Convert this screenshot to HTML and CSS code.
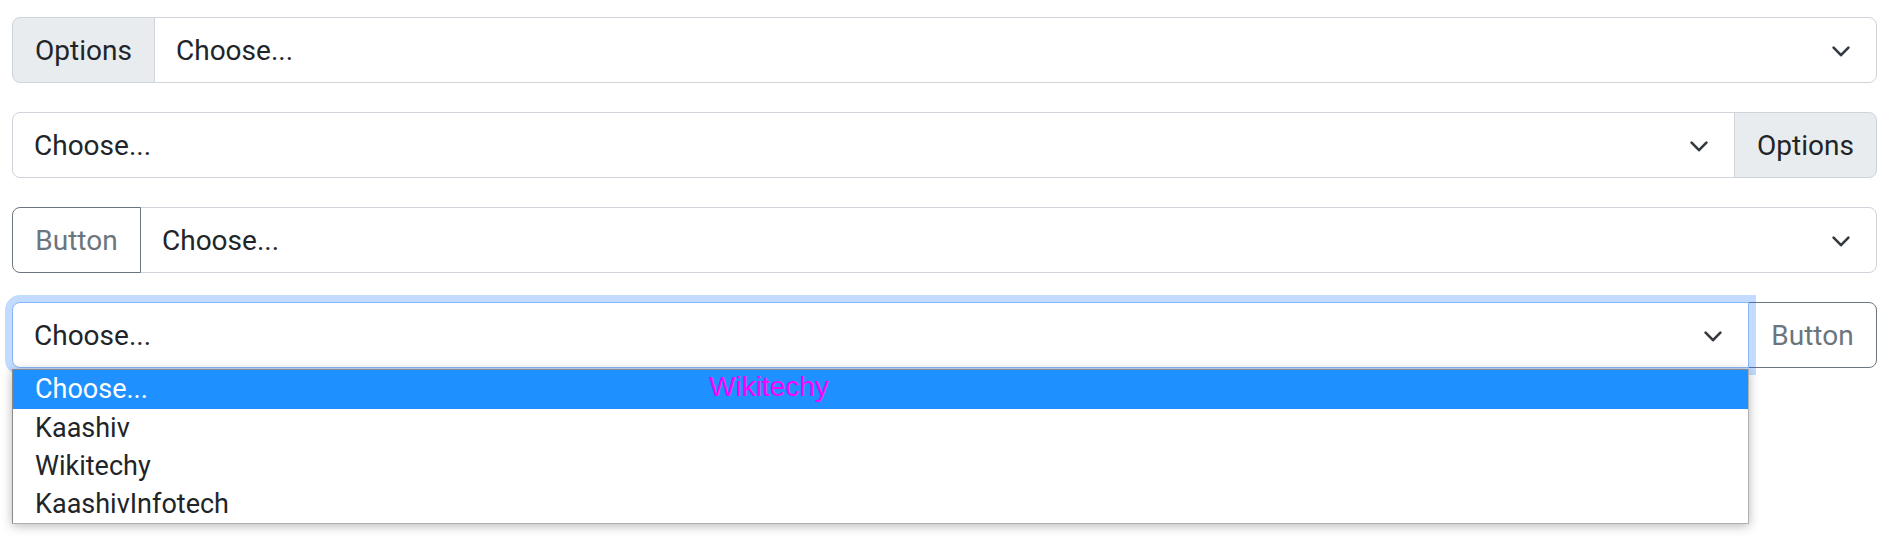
FILE: index.html
```html
<!DOCTYPE html>
<html lang="en">
<head>
<meta charset="utf-8">
<title>Input group selects</title>
<link rel="stylesheet" href="styles.css">
</head>
<body>
<div class="page">
  <div class="input-group">
    <div class="addon addon-first">Options</div>
    <div class="form-select select-last">
      <span>Choose...</span>
      <svg class="chev" width="18" height="12" viewBox="0 0 18 12"><polyline points="1.6,1.6 9,9.2 16.4,1.6"/></svg>
    </div>
  </div>

  <div class="input-group">
    <div class="form-select select-first">
      <span>Choose...</span>
      <svg class="chev" width="18" height="12" viewBox="0 0 18 12"><polyline points="1.6,1.6 9,9.2 16.4,1.6"/></svg>
    </div>
    <div class="addon addon-last">Options</div>
  </div>

  <div class="input-group">
    <div class="btn btn-first">Button</div>
    <div class="form-select select-last">
      <span>Choose...</span>
      <svg class="chev" width="18" height="12" viewBox="0 0 18 12"><polyline points="1.6,1.6 9,9.2 16.4,1.6"/></svg>
    </div>
  </div>

  <div class="input-group">
    <div class="form-select select-first is-focused">
      <span>Choose...</span>
      <svg class="chev" width="18" height="12" viewBox="0 0 18 12"><polyline points="1.6,1.6 9,9.2 16.4,1.6"/></svg>
      <ul class="dropdown">
        <li class="option selected">Choose...</li>
        <li class="option">Kaashiv</li>
        <li class="option">Wikitechy</li>
        <li class="option">KaashivInfotech</li>
      </ul>
    </div>
    <div class="btn btn-last">Button</div>
  </div>
</div>
<div class="watermark">Wikitechy</div>
</body>
</html>
```

FILE: styles.css
```css
html, body {
  margin: 0;
  padding: 0;
  background: #ffffff;
}

body {
  position: relative;
  width: 1892px;
  height: 545px;
  overflow: hidden;
  font-family: Roboto, "Noto Sans", "Liberation Sans", sans-serif;
  font-size: 28px;
  color: #212529;
}

.page {
  padding: 17px 15px 0 12px;
  display: flex;
  flex-direction: column;
  gap: 29px;
}

.input-group {
  display: flex;
  height: 66px;
}

.addon,
.btn,
.form-select {
  box-sizing: border-box;
  height: 66px;
  line-height: 42px;
  padding: 12px 21px 10px;
  border: 1px solid #ced4da;
  white-space: nowrap;
}

.addon {
  flex: none;
  width: 143px;
  text-align: center;
  padding-left: 0;
  padding-right: 0;
  background: #e9ecef;
  color: #212529;
}

.btn {
  flex: none;
  border-color: #6c757d;
  color: #6c757d;
  background: #ffffff;
  position: relative;
  z-index: 2;
  width: 129px;
  text-align: center;
  padding-left: 0;
  padding-right: 0;
}

.addon-first,
.btn-first,
.select-first {
  border-radius: 8px 0 0 8px;
}

.addon-last,
.btn-last,
.select-last {
  border-radius: 0 8px 8px 0;
  margin-left: -1px;
}

.form-select {
  flex: 1;
  position: relative;
  display: flex;
  align-items: center;
  justify-content: space-between;
  padding-right: 26px;
  background: #ffffff;
}

.chev {
  flex: none;
  margin-top: 1px;
}

.chev polyline {
  fill: none;
  stroke: #343a40;
  stroke-width: 2.6;
  stroke-linecap: round;
  stroke-linejoin: round;
}

.is-focused {
  border-color: #86b7fe;
  box-shadow: 0 0 0 7px rgba(13, 110, 253, 0.25);
  z-index: 3;
}

.dropdown {
  position: absolute;
  left: -1px;
  right: -1px;
  top: calc(100% + 2px);
  margin: 0;
  padding: 0;
  list-style: none;
  background: #ffffff;
  border: 1px solid #8a8a8a;
  border-right-color: #b0b0b0;
  border-bottom-color: #b0b0b0;
  box-shadow: 0 2px 10px rgba(0, 0, 0, 0.28);
  z-index: 10;
}

.option {
  height: 38px;
  line-height: 38px;
  padding-left: 22px;
  font-size: 27px;
  color: #212529;
}

.option.selected {
  height: 39px;
  background: #1e90ff;
  color: #ffffff;
}

.watermark {
  position: absolute;
  left: 709px;
  top: 373px;
  font-family: "Liberation Sans", Arial, sans-serif;
  font-size: 28px;
  line-height: 28px;
  color: #ff00ff;
  z-index: 20;
}
```
